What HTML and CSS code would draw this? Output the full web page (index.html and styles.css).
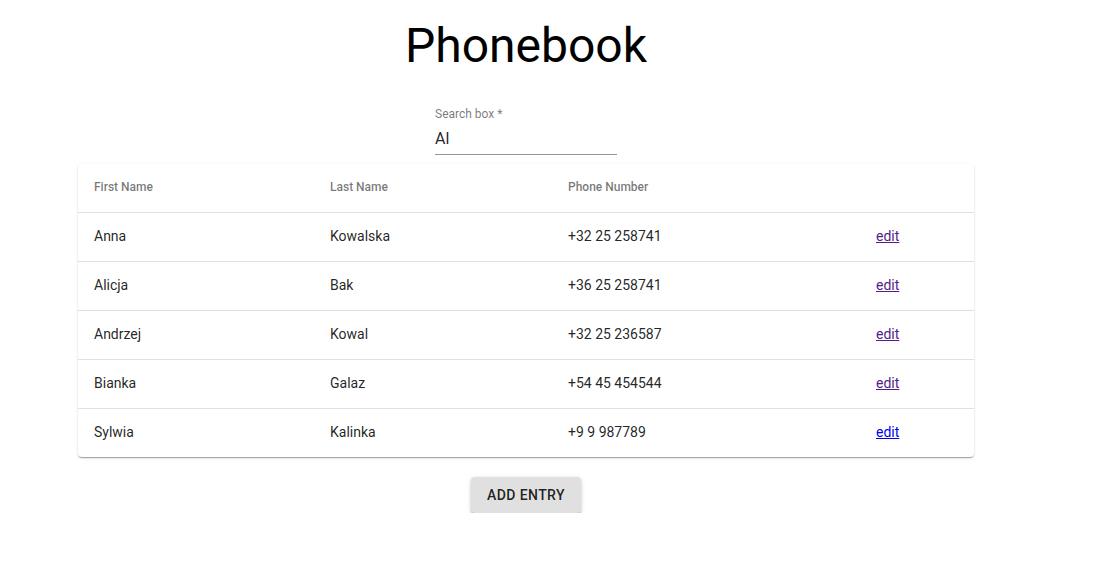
FILE: index.html
```html
<!DOCTYPE html>
<html lang="en">
<head>
<meta charset="utf-8">
<title>Phonebook</title>
<link rel="stylesheet" href="styles.css">
</head>
<body>
<div class="app">
  <h1 class="title">Phonebook</h1>
  <div class="field">
    <label class="field-label">Search box *</label>
    <div class="field-input">Al</div>
  </div>
  <div class="paper">
    <table class="table">
      <thead>
        <tr>
          <th class="col-first">First Name</th>
          <th class="col-last">Last Name</th>
          <th class="col-phone">Phone Number</th>
          <th class="col-edit"></th>
        </tr>
      </thead>
      <tbody>
        <tr><td>Anna</td><td>Kowalska</td><td>+32 25 258741</td><td><a class="link visited" href="#">edit</a></td></tr>
        <tr><td>Alicja</td><td>Bak</td><td>+36 25 258741</td><td><a class="link visited" href="#">edit</a></td></tr>
        <tr><td>Andrzej</td><td>Kowal</td><td>+32 25 236587</td><td><a class="link visited" href="#">edit</a></td></tr>
        <tr><td>Bianka</td><td>Galaz</td><td>+54 45 454544</td><td><a class="link visited" href="#">edit</a></td></tr>
        <tr class="last"><td>Sylwia</td><td>Kalinka</td><td>+9 9 987789</td><td><a class="link" href="#">edit</a></td></tr>
      </tbody>
    </table>
  </div>
  <button class="btn">Add Entry</button>
</div>
</body>
</html>
```
FILE: styles.css
```css
html, body {
  background: #fff;
}
body {
  margin: 8px;
  font-family: Roboto, "Helvetica Neue", Arial, sans-serif;
  color: rgba(0, 0, 0, 0.87);
}
.app {
  width: 1036px;
  display: flex;
  flex-direction: column;
  align-items: center;
}
.title {
  margin: 10px 0 33px;
  font-size: 48px;
  font-weight: 400;
  line-height: 56px;
  color: #000;
}
.field {
  width: 182px;
  display: flex;
  flex-direction: column;
}
.field-label {
  font-size: 12px;
  line-height: 12px;
  color: rgba(0, 0, 0, 0.54);
  margin-top: 1px;
  height: 15px;
}
.field-input {
  font-size: 16px;
  line-height: 19px;
  padding: 6px 0 6px;
  border-bottom: 1px solid rgba(0, 0, 0, 0.42);
  color: rgba(0, 0, 0, 0.87);
}
.paper {
  margin-top: 9px;
  width: 896px;
  background: #fff;
  border-radius: 4px;
  box-shadow: 0 2px 1px -1px rgba(0,0,0,0.2), 0 1px 1px 0 rgba(0,0,0,0.14), 0 1px 3px 0 rgba(0,0,0,0.12);
}
.table {
  width: 100%;
  border-collapse: collapse;
  table-layout: fixed;
}
.table th, .table td {
  height: 46px;
  padding: 0 16px 2px;
  text-align: left;
  vertical-align: middle;
  border-bottom: 1px solid rgb(224, 224, 224);
}
.table th {
  font-size: 12px;
  font-weight: 500;
  color: rgba(0, 0, 0, 0.54);
}
.table td {
  font-size: 14px;
  font-weight: 400;
  color: rgba(0, 0, 0, 0.87);
}
.table tr.last td {
  border-bottom: none;
}
.col-first { width: 204px; }
.col-last { width: 206px; }
.col-phone { width: 276px; }
.col-edit { width: 82px; }
.link {
  color: #0000ee;
  text-decoration: underline;
}
.link.visited {
  color: #551a8b;
}
.btn {
  margin-top: 20px;
  padding: 6px 16px;
  min-width: 64px;
  height: 36px;
  border: none;
  border-radius: 4px;
  background: #e0e0e0;
  color: rgba(0, 0, 0, 0.87);
  font-family: Roboto, "Helvetica Neue", Arial, sans-serif;
  font-size: 14px;
  font-weight: 500;
  line-height: 24px;
  letter-spacing: 0.4px;
  text-transform: uppercase;
  box-shadow: 0 3px 1px -2px rgba(0,0,0,0.25), 0 2px 2px 0 rgba(0,0,0,0.18), 0 1px 5px 0 rgba(0,0,0,0.14);
  cursor: pointer;
}
```
